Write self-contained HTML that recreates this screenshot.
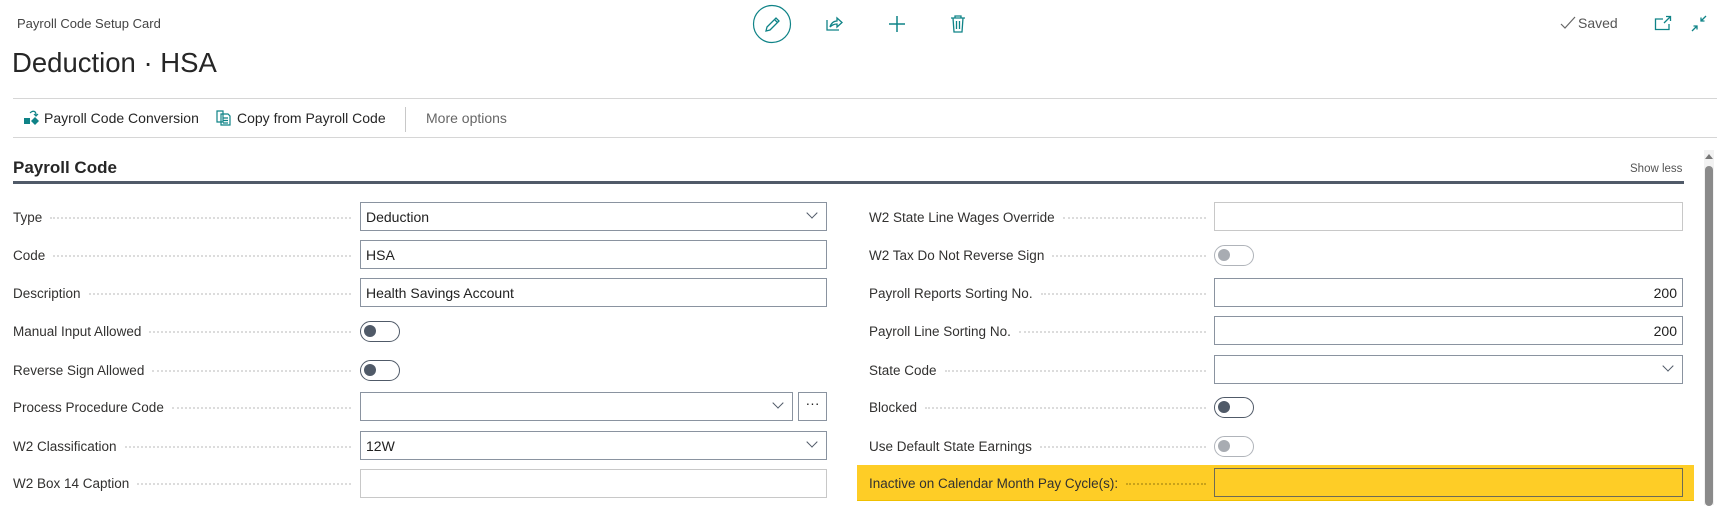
<!DOCTYPE html>
<html><head><meta charset="utf-8"><style>
*{box-sizing:border-box;margin:0;padding:0}
body{width:1730px;height:505px;background:#fff;font-family:"Liberation Sans",sans-serif;color:#212121;position:relative;overflow:hidden}
.a{position:absolute}
.lbl{position:absolute;font-size:13.5px;color:#323130;display:flex;align-items:center;height:20px}
.lbl span{white-space:nowrap}
.lbl b{flex:1;border-top:2px dotted #dcdcdc;margin-left:8px;height:0;margin-top:2px}
.L{left:13px;width:338px}.R{left:869px;width:337px}
.in{position:absolute;height:29px;border:1px solid #8a93a0;background:#fff;font-size:14px;padding:6px 5px;color:#212121}
.dis{border-color:#c8c8c8}
.chev{position:absolute;right:10px;top:6px;width:8px;height:8px;border-right:1.2px solid #505a68;border-bottom:1.2px solid #505a68;transform:rotate(45deg)}
.tg{position:absolute;width:40px;height:21px;border:1.5px solid #505a68;border-radius:11px}
.tg i{position:absolute;left:3px;top:3px;width:12px;height:12px;border-radius:50%;background:#505a68}
.tg.d{border-color:#b0b4ba}.tg.d i{background:#a8acb2}
</style></head><body>
<div class="a" style="left:17px;top:16px;font-size:13px;color:#444">Payroll Code Setup Card</div>
<div class="a" style="left:12px;top:47px;font-size:27.5px;color:#262626">Deduction · HSA</div>

<svg class="a" style="left:752px;top:4px" width="40" height="40"><circle cx="20" cy="20" r="18.5" fill="none" stroke="#0f8387" stroke-width="1.2"/><path d="M14 27 L15 23 L24 14 L27 17 L18 26 Z M22.5 15.5 L25.5 18.5" fill="none" stroke="#0f8387" stroke-width="1.3"/></svg>
<svg class="a" style="left:824px;top:14px" width="20" height="20"><path d="M3 6 V16 H15 M6 13 C7 9 10 7 13 7 V4 L18 8.5 L13 13 V10 C10 10 8 11 6 13" fill="none" stroke="#0f8387" stroke-width="1.3"/></svg>
<svg class="a" style="left:887px;top:14px" width="20" height="20"><path d="M10 2 V18 M2 10 H18" stroke="#0f8387" stroke-width="1.5"/></svg>
<svg class="a" style="left:949px;top:14px" width="18" height="20"><path d="M2 4 H16 M6 4 V2 H12 V4 M4 4 L5 18 H13 L14 4 M7.5 7 V15 M10.5 7 V15" fill="none" stroke="#0f8387" stroke-width="1.3"/></svg>

<svg class="a" style="left:1560px;top:16px" width="16" height="14"><path d="M1 8 L5 12 L15 1" fill="none" stroke="#666" stroke-width="1.2"/></svg>
<div class="a" style="left:1578px;top:15px;font-size:14px;color:#555">Saved</div>
<svg class="a" style="left:1654px;top:15px" width="18" height="16"><path d="M9 4 H1.5 V14.5 H15 V9 M12 1.5 H16.5 V6 M16.5 1.5 L10 8" fill="none" stroke="#0f8387" stroke-width="1.3"/></svg>
<svg class="a" style="left:1690px;top:15px" width="18" height="18"><path d="M16 1 L11 6 M11 2.5 V6 H14.5 M2 16 L7 11 M3.5 11 H7 V14.5" fill="none" stroke="#0f8387" stroke-width="1.3"/></svg>

<div class="a" style="left:13px;top:98px;width:1704px;height:1px;background:#d6d6d6"></div>
<div class="a" style="left:13px;top:137px;width:1704px;height:1px;background:#d6d6d6"></div>
<svg class="a" style="left:23px;top:109px" width="18" height="18"><rect x="1" y="9" width="6" height="6" fill="#0f8387"/><path d="M12 8 L16 12 L12 16 L8 12 Z" fill="#0f8387"/><path d="M7 4 C10 1 13 2 13 6 M11 5 L13 7 L15 5" fill="none" stroke="#0f8387" stroke-width="1.2"/></svg>
<div class="a" style="left:44px;top:110px;font-size:14px;color:#262626">Payroll Code Conversion</div>
<svg class="a" style="left:216px;top:110px" width="16" height="16"><path d="M1 1 H7 V12 H1 Z M5 4 H12 L14 6 V15 H5 Z M7 8 H12 M7 10.5 H12 M7 13 H12" fill="none" stroke="#0f8387" stroke-width="1.2"/></svg>
<div class="a" style="left:237px;top:110px;font-size:14px;color:#262626">Copy from Payroll Code</div>
<div class="a" style="left:405px;top:107px;width:1px;height:25px;background:#c8c8c8"></div>
<div class="a" style="left:426px;top:110px;font-size:14px;color:#666">More options</div>

<div class="a" style="left:13px;top:158px;font-size:17px;font-weight:bold;color:#262626">Payroll Code</div>
<div class="a" style="left:1630px;top:163px;font-size:11.5px;color:#555">Show less</div>
<div class="a" style="left:13px;top:181px;width:1671px;height:3px;background:#505a68"></div>

<div class="a" style="left:1704px;top:150px;width:10px;height:355px;background:#f2f2f2"></div>
<svg class="a" style="left:1704px;top:152px" width="10" height="8"><path d="M1 7 L5 2 L9 7Z" fill="#777"/></svg>
<div class="a" style="left:1705px;top:166px;width:8px;height:340px;border-radius:4px;background:#8a8a8a"></div>

<div class="a" style="left:857px;top:465px;width:837px;height:35px;background:#fecd26;box-shadow:0 1px 0 #f0c000"></div>

<!-- left column -->
<div class="lbl L" style="top:207px"><span>Type</span><b></b></div>
<div class="in" style="left:360px;top:202px;width:467px">Deduction<div class="chev"></div></div>
<div class="lbl L" style="top:245px"><span>Code</span><b></b></div>
<div class="in" style="left:360px;top:240px;width:467px">HSA</div>
<div class="lbl L" style="top:283px"><span>Description</span><b></b></div>
<div class="in" style="left:360px;top:278px;width:467px">Health Savings Account</div>
<div class="lbl L" style="top:321px"><span>Manual Input Allowed</span><b></b></div>
<div class="tg" style="left:360px;top:321px"><i></i></div>
<div class="lbl L" style="top:360px"><span>Reverse Sign Allowed</span><b></b></div>
<div class="tg" style="left:360px;top:360px"><i></i></div>
<div class="lbl L" style="top:397px"><span>Process Procedure Code</span><b></b></div>
<div class="in" style="left:360px;top:392px;width:433px"><div class="chev"></div></div>
<div class="in" style="left:798px;top:392px;width:29px;text-align:center;padding:2px 0;font-size:14px">···</div>
<div class="lbl L" style="top:436px"><span>W2 Classification</span><b></b></div>
<div class="in" style="left:360px;top:431px;width:467px">12W<div class="chev"></div></div>
<div class="lbl L" style="top:473px"><span>W2 Box 14 Caption</span><b></b></div>
<div class="in dis" style="left:360px;top:469px;width:467px"></div>

<!-- right column -->
<div class="lbl R" style="top:207px"><span>W2 State Line Wages Override</span><b></b></div>
<div class="in dis" style="left:1214px;top:202px;width:469px"></div>
<div class="lbl R" style="top:245px"><span>W2 Tax Do Not Reverse Sign</span><b></b></div>
<div class="tg d" style="left:1214px;top:245px"><i></i></div>
<div class="lbl R" style="top:283px"><span>Payroll Reports Sorting No.</span><b></b></div>
<div class="in" style="left:1214px;top:278px;width:469px;text-align:right">200</div>
<div class="lbl R" style="top:321px"><span>Payroll Line Sorting No.</span><b></b></div>
<div class="in" style="left:1214px;top:316px;width:469px;text-align:right">200</div>
<div class="lbl R" style="top:360px"><span>State Code</span><b></b></div>
<div class="in" style="left:1214px;top:355px;width:469px"><div class="chev"></div></div>
<div class="lbl R" style="top:397px"><span>Blocked</span><b></b></div>
<div class="tg" style="left:1214px;top:397px"><i></i></div>
<div class="lbl R" style="top:436px"><span>Use Default State Earnings</span><b></b></div>
<div class="tg d" style="left:1214px;top:436px"><i></i></div>
<div class="lbl R" style="top:473px"><span>Inactive on Calendar Month Pay Cycle(s):</span><b style="border-color:#c9a21a"></b></div>
<div class="in" style="left:1214px;top:468px;width:469px;height:29px;background:#fecd26;border-color:#6e6a55"></div>
</body></html>
